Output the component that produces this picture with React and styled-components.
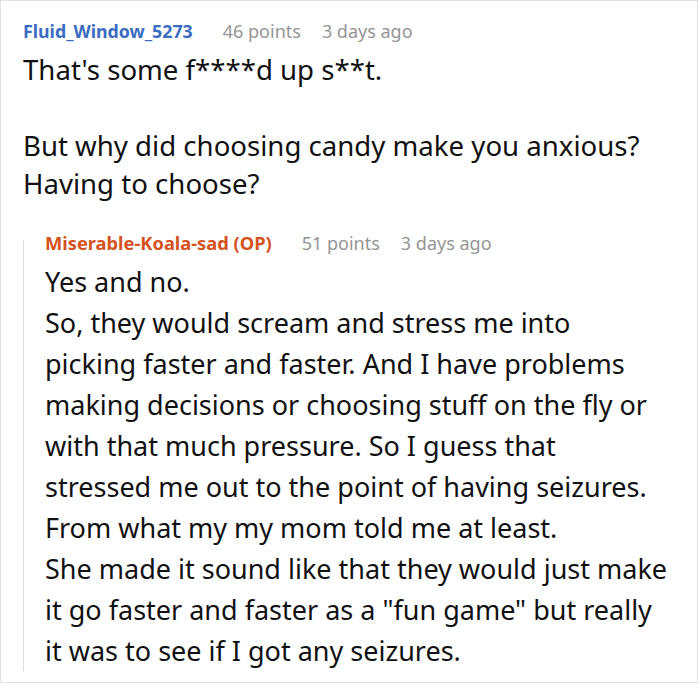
import styled, { createGlobalStyle } from "styled-components";

const Global = createGlobalStyle`
  body {
    margin: 0;
    background: #ffffff;
    font-family: "Noto Sans", "Open Sans", sans-serif;
  }
`

const Card = styled.div`
  width: 698px;
  height: 683px;
  box-sizing: border-box;
  border: 1px solid #e2e2e2;
  padding: 15px 0 0 22px;
  overflow: hidden;
`
const Header = styled.div`
  display: flex;
  align-items: baseline;
  gap: 21px;
  line-height: 30px;
  white-space: nowrap;
`
const Author = styled.span`
  font-weight: 700;
  font-size: ${props => props.op ? 18.3 : 17.8}px;
  color: ${props => props.op ? "#d4521c" : "#3a6cc1"};
  margin-right: 9px;
`
const Meta = styled.span`
  font-size: 18px;
  color: #959595;
`
const Body = styled.div`
  font-size: ${props => props.size}px;
  line-height: ${props => props.lh}px;
  color: #111;
  margin-top: ${props => props.gap}px;
  white-space: nowrap;
`
const Line = styled.div`
  min-height: ${props => props.lh}px;
`
const Reply = styled.div`
  display: flex;
  margin-top: 26px;
`
const Rule = styled.div`
  width: 1px;
  background: #dcdcdc;
  margin-top: 12px;
  flex-shrink: 0;
`
const ReplyContent = styled.div`
  padding-left: 21px;
  flex: 1;
`

const topLines = [
    "That's some f****d up s**t.",
    "",
    "But why did choosing candy make you anxious?",
    "Having to choose?",
]

const replyLines = [
    "Yes and no.",
    "So, they would scream and stress me into",
    "picking faster and faster. And I have problems",
    "making decisions or choosing stuff on the fly or",
    "with that much pressure. So I guess that",
    "stressed me out to the point of having seizures.",
    "From what my my mom told me at least.",
    "She made it sound like that they would just make",
    "it go faster and faster as a \"fun game\" but really",
    "it was to see if I got any seizures.",
]

function Comment({ author, op, points, age, lines, size, lh, gap }) {
    return (
        <div>
            <Header>
                <Author op={op}>{author}</Author>
                <Meta>{points} points</Meta>
                <Meta>{age}</Meta>
            </Header>
            <Body size={size} lh={lh} gap={gap}>
                {lines.map((l, i) => <Line key={i} lh={lh}>{l}</Line>)}
            </Body>
        </div>
    )
}

export default function App() {
    return (
        <Card>
            <Global />
            <Comment author="Fluid_Window_5273" points={46} age="3 days ago" lines={topLines} size={27.6} lh={38} gap={4} />
            <Reply>
                <Rule />
                <ReplyContent>
                    <Comment author="Miserable-Koala-sad (OP)" op points={51} age="3 days ago" lines={replyLines} size={27} lh={41} gap={3} />
                </ReplyContent>
            </Reply>
        </Card>
    )
}
